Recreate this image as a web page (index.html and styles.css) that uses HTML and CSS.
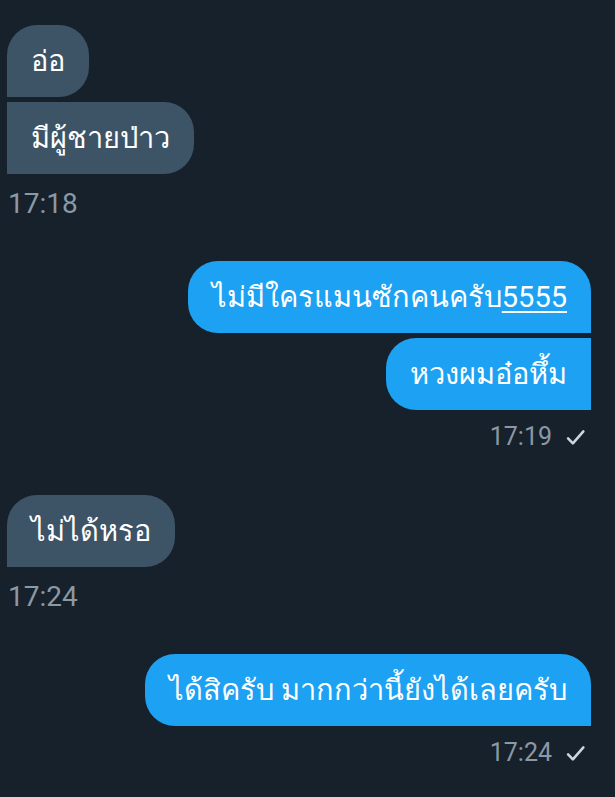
FILE: index.html
```html
<!DOCTYPE html>
<html lang="th">
<head>
<meta charset="utf-8">
<link rel="stylesheet" href="styles.css">
</head>
<body>
<div class="chat">
  <div class="group in">
    <div class="bubble first">อ่อ</div>
    <div class="bubble last">มีผู้ชายป่าว</div>
    <div class="time">17:18</div>
  </div>
  <div class="group out">
    <div class="bubble first">ไม่มีใครแมนซักคนครับ<span class="link">5555</span></div>
    <div class="bubble last">หวงผมอ๋อหึ้ม</div>
    <div class="time">17:19 <svg class="check" viewBox="0 0 24 24" width="21" height="21"><path d="M3.5 13l5.5 5.8L21 5" fill="none" stroke="currentColor" stroke-width="2.9" stroke-linecap="round" stroke-linejoin="round"/></svg></div>
  </div>
  <div class="group in">
    <div class="bubble single">ไม่ได้หรอ</div>
    <div class="time">17:24</div>
  </div>
  <div class="group out">
    <div class="bubble single">ได้สิครับ มากกว่านี้ยังได้เลยครับ</div>
    <div class="time">17:24 <svg class="check" viewBox="0 0 24 24" width="21" height="21"><path d="M3.5 13l5.5 5.8L21 5" fill="none" stroke="currentColor" stroke-width="2.9" stroke-linecap="round" stroke-linejoin="round"/></svg></div>
  </div>
</div>
</body>
</html>
```
FILE: styles.css
```css
html, body {
  margin: 0;
  padding: 0;
  background: #17212b;
  height: 100%;
}
.chat {
  padding: 25px 24px 0 7px;
  display: flex;
  flex-direction: column;
  gap: 41px;
  font-family: Roboto, sans-serif;
}
.group {
  display: flex;
  flex-direction: column;
  gap: 5px;
}
.group.in { align-items: flex-start; }
.group.out { align-items: flex-end; }
.bubble {
  font-size: 29px;
  line-height: 36px;
  padding: 18px 24px 18px 24px;
  color: #ffffff;
  border-radius: 30px;
}
.in .bubble { background: #3d5466; }
.out .bubble { background: #1da1f2; }
.in .first { border-bottom-left-radius: 0; }
.in .last { border-top-left-radius: 0; border-bottom-left-radius: 0; }
.in .single { border-bottom-left-radius: 0; }
.out .first { border-bottom-right-radius: 0; }
.out .last { border-top-right-radius: 0; border-bottom-right-radius: 0; }
.out .single { border-bottom-right-radius: 0; }
.link { text-decoration: underline; text-underline-offset: 4px; text-decoration-thickness: 2px; }
.time {
  line-height: 32px;
  color: #8b98a5;
  display: flex;
  align-items: center;
}
.in .time { font-size: 28px; margin-top: 9px; padding-left: 1px; }
.out .time { font-size: 25px; margin-top: 6px; margin-bottom: 1px; padding-right: 5px; gap: 13px; }
.check { color: #ccd6dd; }
```
